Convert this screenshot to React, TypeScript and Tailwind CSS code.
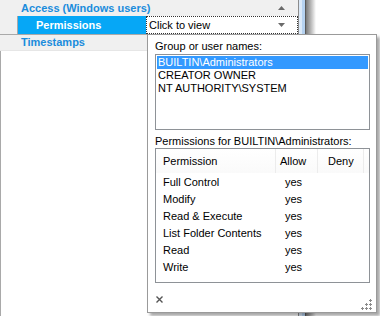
import React from "react";

const rows = [
  "Full Control",
  "Modify",
  "Read & Execute",
  "List Folder Contents",
  "Read",
  "Write",
];

function Grip() {
  const dots: [number, number][] = [
    [8, 0],
    [4, 4],
    [8, 4],
    [0, 8],
    [4, 8],
    [8, 8],
  ];
  return (
    <svg width="11" height="11" viewBox="0 0 11 11">
      {dots.map(([x, y], i) => (
        <g key={i} fill="#8a8a8a">
          <rect x={x + 1} y={y} width="1" height="3" />
          <rect x={x} y={y + 1} width="3" height="1" />
        </g>
      ))}
    </svg>
  );
}

export default function App() {
  return (
    <div className="relative w-[380px] h-[316px] bg-white overflow-hidden text-[11px] leading-[13px] text-black font-['Liberation_Sans',Arial,sans-serif]">
      <div className="flex h-full">
        {/* property grid */}
        <div className="w-[298px] flex flex-col">
          <div className="h-[16px] bg-[#f0f0f0] flex items-center pl-[21px] pr-[13px] font-bold text-[#1a8cdc]">
            <span className="flex-1">Access (Windows users)</span>
            <svg width="7" height="4" viewBox="0 0 7 4" className="mb-[1px]">
              <path d="M0 4 L3.5 0 L7 4 Z" fill="#6a6a6a" />
            </svg>
          </div>
          <div className="h-[19px] flex border-b border-[#a9a9a9]">
            <div className="w-[17px] bg-[#f0f0f0]" />
            <div className="w-[129px] bg-[#06a7f6] border-l border-[#a9a9a9] flex items-center pl-[18px] font-bold text-white">
              Permissions
            </div>
            <div className="flex-1 bg-white border border-dotted border-[#333] flex items-center pl-[2px] pr-[12px]">
              <span className="flex-1">Click to view</span>
              <svg width="7" height="4" viewBox="0 0 7 4">
                <path d="M0 0 L3.5 4 L7 0 Z" fill="#6a6a6a" />
              </svg>
            </div>
          </div>
          <div className="h-[16px] bg-[#f0f0f0] flex items-center pl-[21px] font-bold text-[#1a8cdc] border-b border-[#e6e6e6]">
            Timestamps
          </div>
          <div className="flex-1 bg-white border-l border-[#a9a9a9]" />
        </div>
        {/* scrollbar edge + window shadow */}
        <div className="w-[1px] bg-[#8c8c8c]" />
        <div className="w-[3px] bg-[#dbe9f8]" />
        <div className="w-[3px] bg-[#b6d2f0]" />
        <div className="w-[1px] bg-[#5a5a5a]" />
        <div className="w-[10px] bg-gradient-to-r from-[#7a7a7a] to-white" />
        <div className="flex-1" />
      </div>

      {/* dropdown popup */}
      <div className="absolute left-[147px] top-[34px] w-[230px] h-[279px] bg-white border border-[#9a9a9a] shadow-[3px_3px_3px_rgba(0,0,0,0.35)] flex flex-col pl-[7px] pr-[6px]">
        <div className="mt-[5px] h-[13px]">Group or user names:</div>
        <div className="mt-[1px] h-[76px] border border-[#8e9297] p-[1px] flex flex-col">
          <div className="h-[13px] bg-[#3399ff] text-white pl-[1px]">BUILTIN\Administrators</div>
          <div className="h-[13px] pl-[1px]">CREATOR OWNER</div>
          <div className="h-[13px] pl-[1px]">NT AUTHORITY\SYSTEM</div>
        </div>
        <div className="mt-[5px] h-[13px]">Permissions for BUILTIN\Administrators:</div>
        <div className="h-[135px] border border-[#8e9297] flex flex-col">
          <div className="h-[24px] flex items-center bg-gradient-to-b from-white to-[#fafafa]">
            <div className="w-[120px] h-full border-r border-[#ececec] flex items-center pl-[7px] pt-[1px]">Permission</div>
            <div className="w-[42px] h-full border-r border-[#ececec] flex items-center pl-[4px] pt-[1px]">Allow</div>
            <div className="w-[46px] h-full border-r border-[#ececec] flex items-center pl-[10px] pt-[1px]">Deny</div>
          </div>
          <div className="mt-[1px] flex flex-col">
            {rows.map((r) => (
              <div key={r} className="h-[17px] flex items-center">
                <div className="w-[120px] pl-[7px]">{r}</div>
                <div className="w-[42px] pl-[9px]">yes</div>
              </div>
            ))}
          </div>
        </div>
        <div className="flex-1 flex items-end justify-between pb-[3px]">
          <svg width="7" height="7" viewBox="0 0 7 7" className="mb-[6px] ml-[1px]">
            <path d="M0.5 0.5 L6.5 6.5 M6.5 0.5 L0.5 6.5" stroke="#555" strokeWidth="1.4" />
          </svg>
          <div className="mr-[-2px] mb-[-1px]">
            <Grip />
          </div>
        </div>
      </div>
    </div>
  );
}
